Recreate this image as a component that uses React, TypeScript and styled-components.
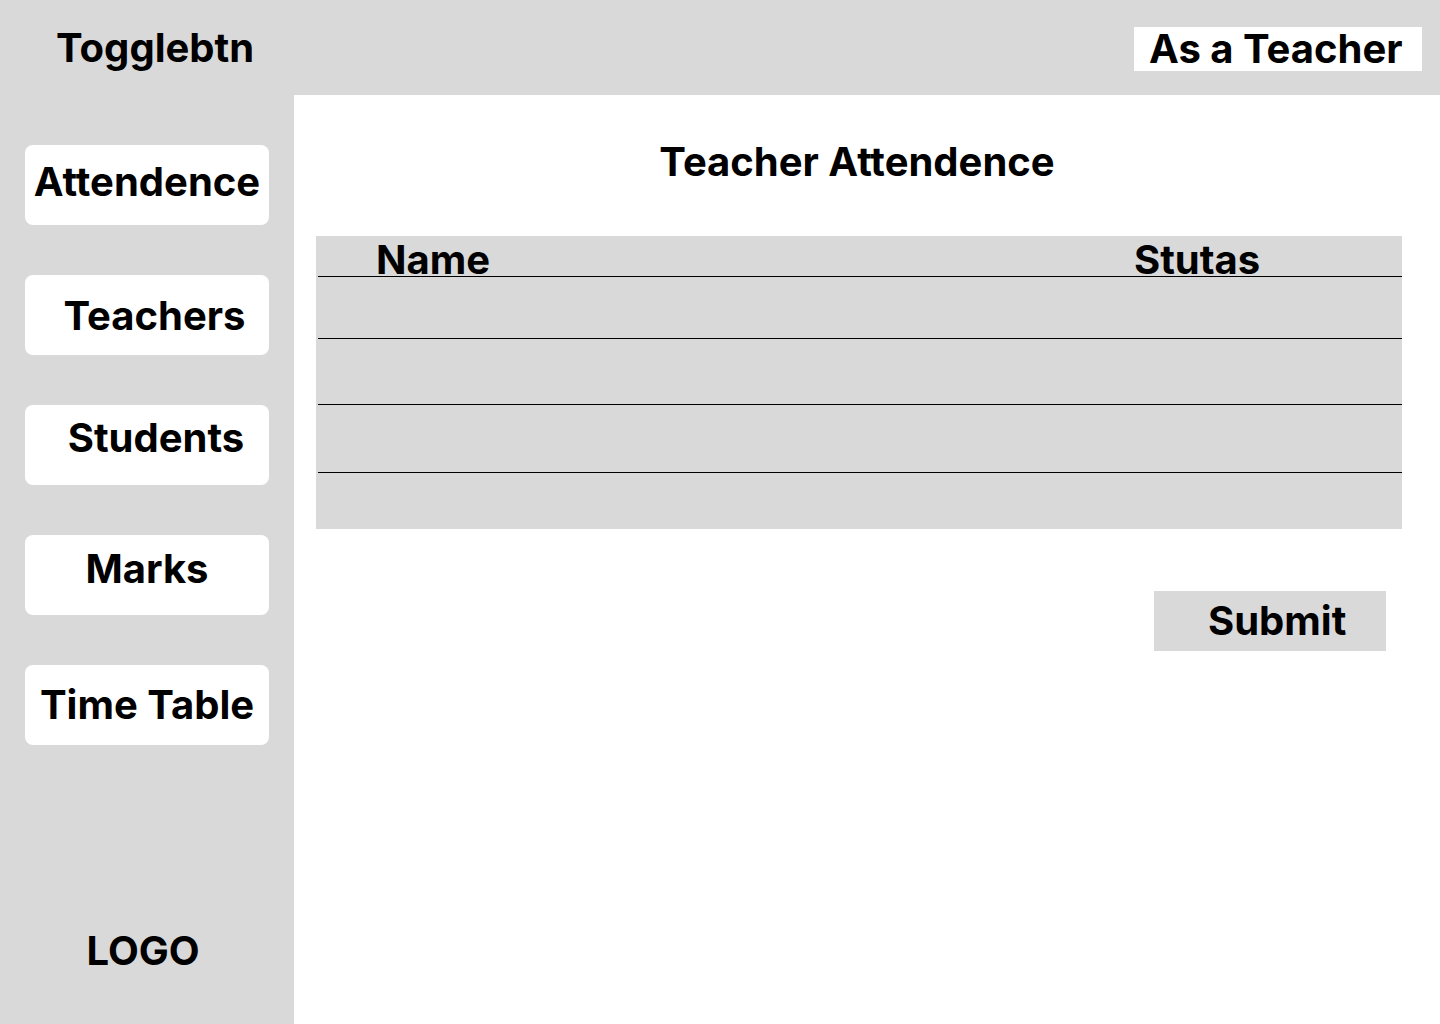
import styled, { createGlobalStyle } from "styled-components";

const GlobalStyle = createGlobalStyle`
  * {
    box-sizing: border-box;
  }
  body {
    margin: 0;
    font-family: Inter, "Liberation Sans", sans-serif;
    font-variant-ligatures: none;
    font-feature-settings: "liga" 0, "calt" 0;
    color: #000;
    background: #fff;
  }
`;

const Page = styled.div`
  width: 1440px;
  height: 1024px;
  display: flex;
  flex-direction: column;
  background-color: #d9d9d9;
  font-weight: 700;
  font-size: 40px;
  overflow: hidden;
`;

const TopBar = styled.header`
  height: 95px;
  flex-shrink: 0;
  display: flex;
  align-items: center;
  justify-content: space-between;
  padding-right: 18px;
`;

const Toggle = styled.div`
  width: 294px;
  padding-left: 56px;
`;

const Role = styled.div`
  background-color: #fff;
  height: 44px;
  width: 288px;
  line-height: 44px;
  padding-left: 15px;
  margin-top: 2px;
  white-space: nowrap;
`;

const Body = styled.div`
  flex: 1;
  display: flex;
`;

const Sidebar = styled.nav`
  width: 294px;
  flex-shrink: 0;
  display: flex;
  flex-direction: column;
  align-items: flex-start;
  padding: 50px 0 49px 25px;
  gap: 50px;
`;

const NavButton = styled.div<{ $dx: number; $dy: number }>`
  width: 244px;
  height: 80px;
  background-color: #fff;
  border-radius: 8px;
  display: flex;
  align-items: center;
  justify-content: center;
  padding-left: ${(p) => p.$dx}px;
  padding-bottom: ${(p) => p.$dy}px;
  white-space: nowrap;
`;

const Logo = styled.div`
  margin-top: auto;
  width: 244px;
  text-align: center;
  padding-right: 8px;
`;

const Main = styled.main`
  flex: 1;
  background-color: #fff;
  display: flex;
  flex-direction: column;
  padding: 42px 38px 0 22px;
`;

const Title = styled.h1`
  margin: 0 0 50px;
  font-size: 40px;
  font-weight: 700;
  text-align: center;
  padding-right: 4px;
`;

const Table = styled.div`
  background-color: #d9d9d9;
  display: flex;
  flex-direction: column;
`;

const Row = styled.div<{ $height: number; $last?: boolean }>`
  height: ${(p) => p.$height}px;
  margin-left: 2px;
  border-bottom: ${(p) => (p.$last ? "none" : "1px solid #000")};
  display: grid;
  grid-template-columns: 758px 1fr;
  padding-left: 58px;
  line-height: normal;
`;

const HeadCell = styled.div`
  margin-top: -1px;
`;

const Actions = styled.div`
  display: flex;
  justify-content: flex-end;
  padding: 62px 16px 0 0;
`;

const SubmitButton = styled.button`
  width: 232px;
  height: 60px;
  border: none;
  background-color: #d9d9d9;
  font-family: inherit;
  font-size: 40px;
  font-weight: 700;
  color: #000;
  text-align: left;
  padding: 0 0 0 54px;
  line-height: 56px;
`;

const navItems = [
  { label: "Attendence", dx: 0, dy: 8 },
  { label: "Teachers", dx: 15, dy: 0 },
  { label: "Students", dx: 18, dy: 16 },
  { label: "Marks", dx: 0, dy: 14 },
  { label: "Time Table", dx: 0, dy: 2 },
];

const rows = [62, 66, 68, 56];

const App = () => {
  return (
    <Page>
      <GlobalStyle />
      <TopBar>
        <Toggle>Togglebtn</Toggle>
        <Role>As a Teacher</Role>
      </TopBar>
      <Body>
        <Sidebar>
          {navItems.map((item) => (
            <NavButton key={item.label} $dx={item.dx} $dy={item.dy}>
              {item.label}
            </NavButton>
          ))}
          <Logo>LOGO</Logo>
        </Sidebar>
        <Main>
          <Title>Teacher Attendence</Title>
          <Table>
            <Row $height={41}>
              <HeadCell>Name</HeadCell>
              <HeadCell>Stutas</HeadCell>
            </Row>
            {rows.map((h, i) => (
              <Row key={i} $height={h} $last={i === rows.length - 1}>
                <div />
                <div />
              </Row>
            ))}
          </Table>
          <Actions>
            <SubmitButton>Submit</SubmitButton>
          </Actions>
        </Main>
      </Body>
    </Page>
  );
};

export default App;
